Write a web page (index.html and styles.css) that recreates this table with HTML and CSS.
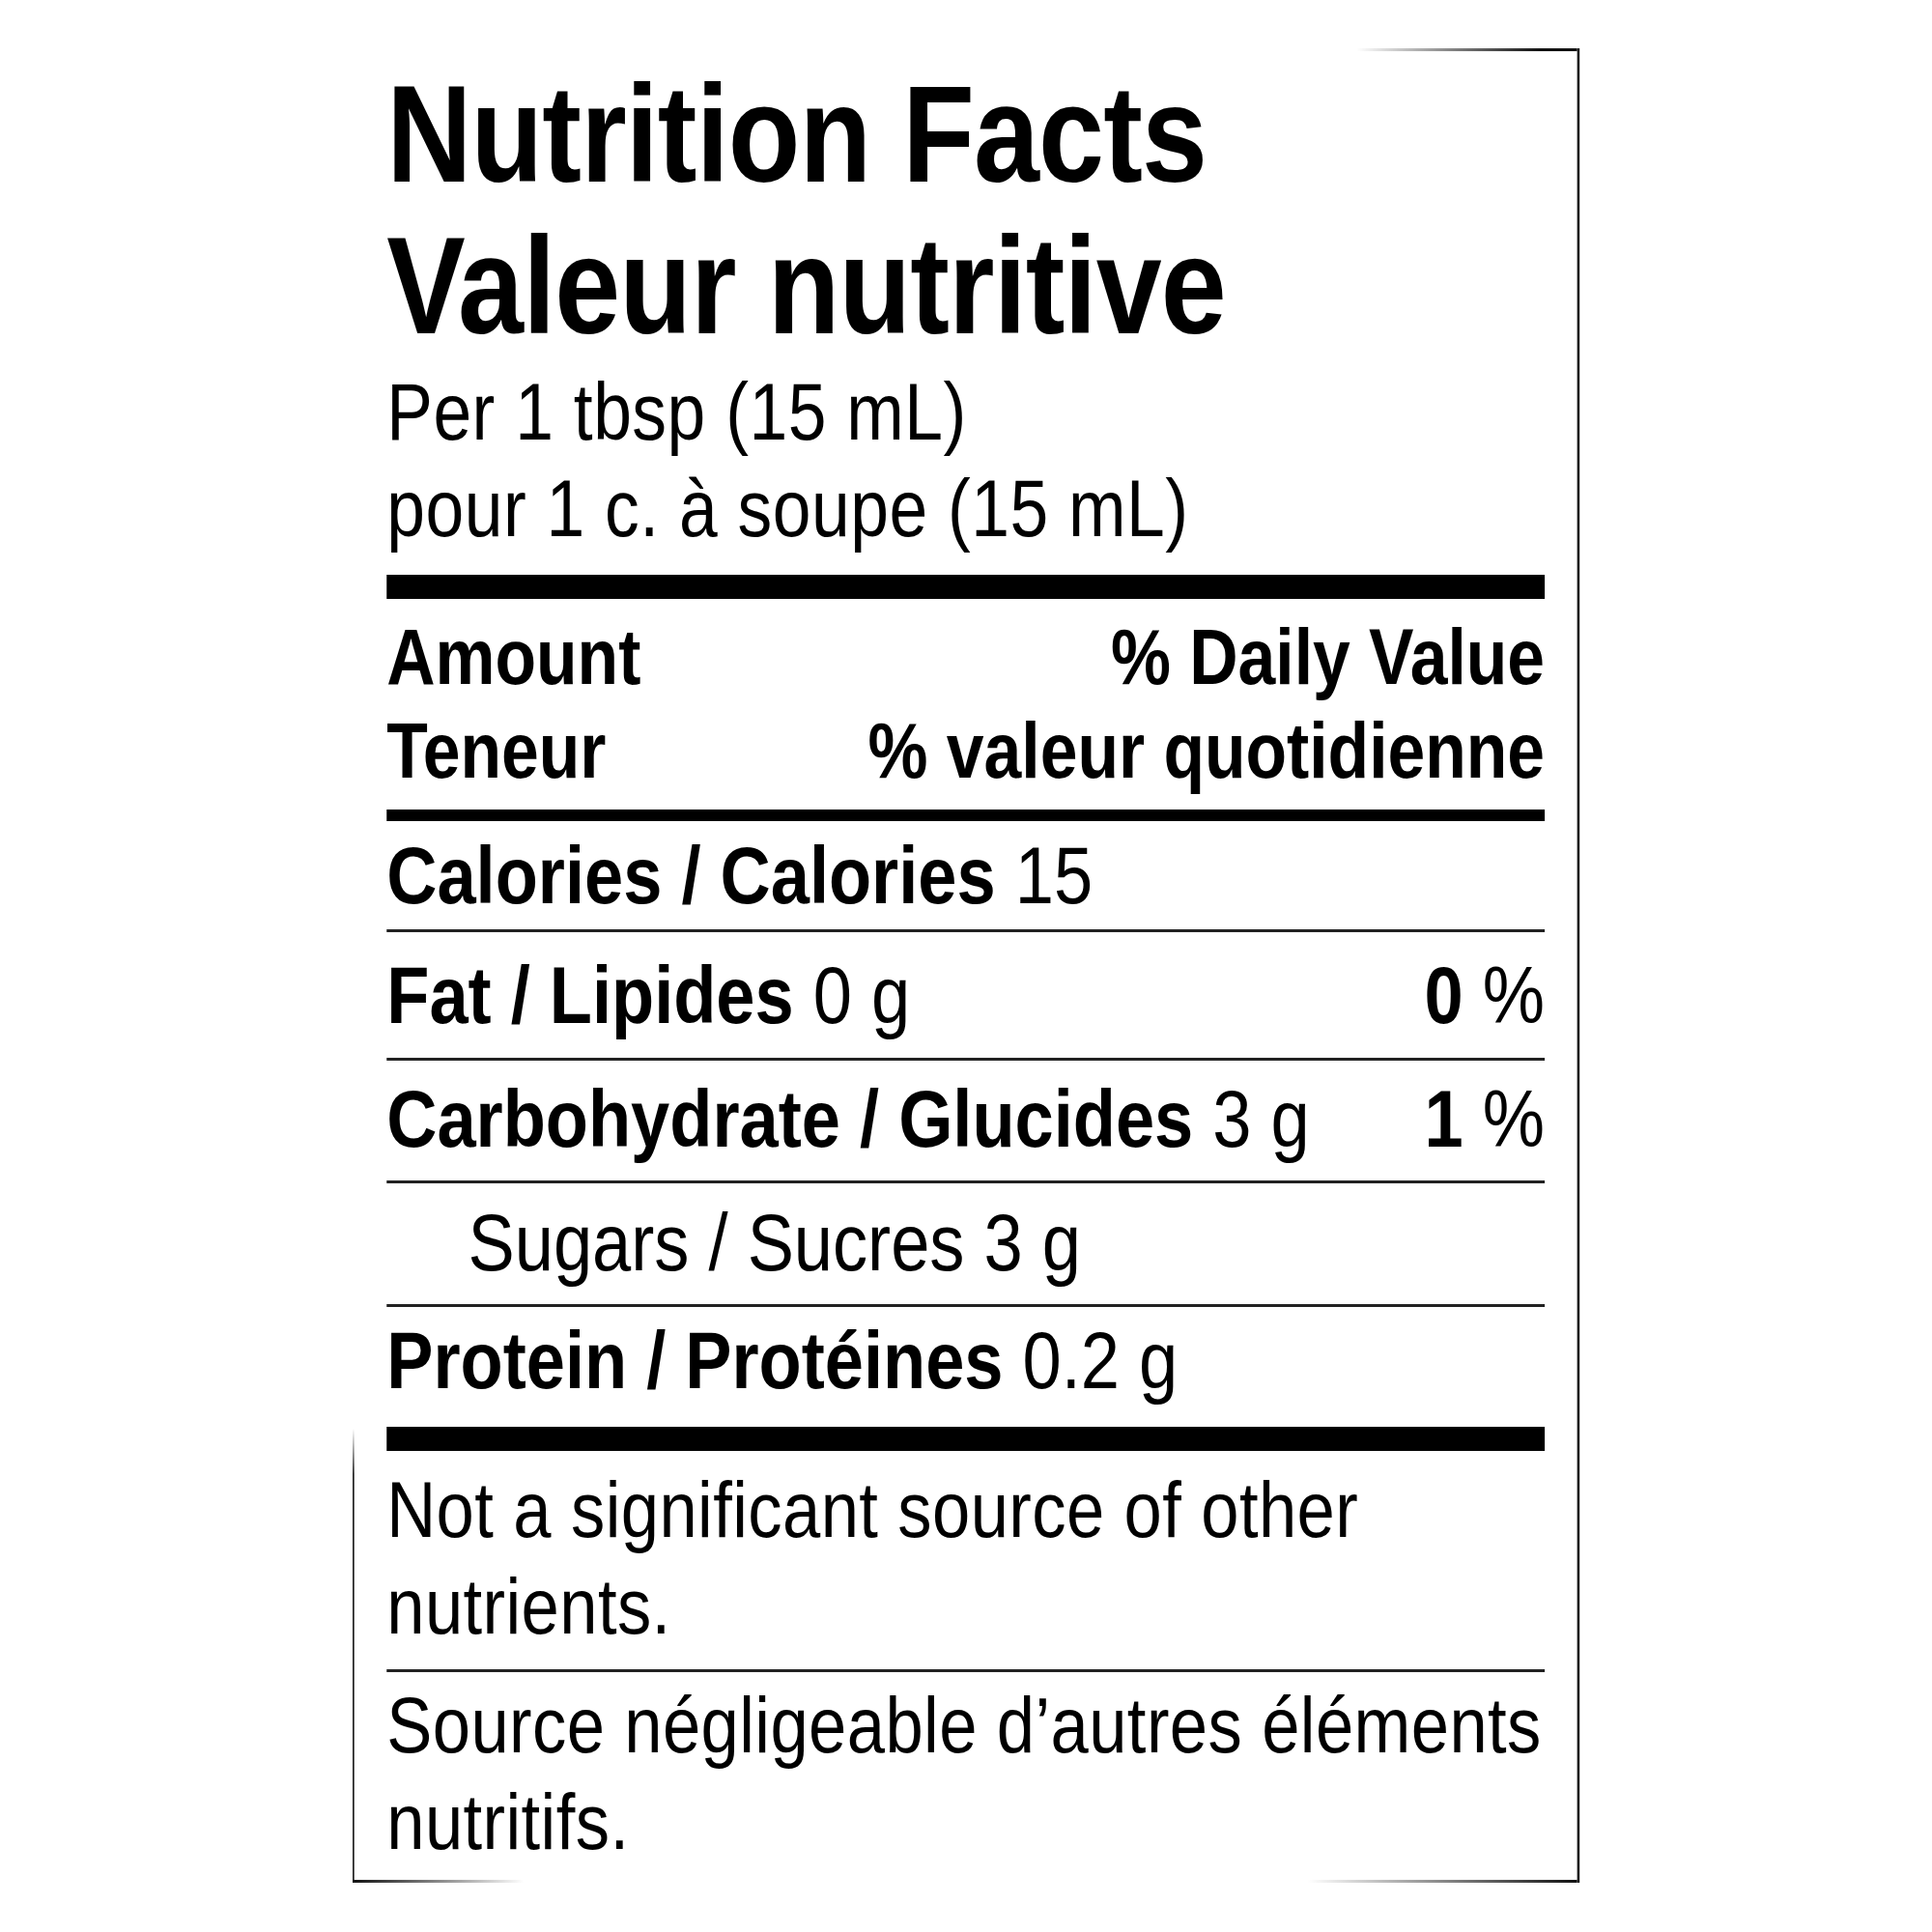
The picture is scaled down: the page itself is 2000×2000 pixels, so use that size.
FILE: index.html
```html
<!DOCTYPE html>
<html lang="en">
<head>
<meta charset="utf-8">
<title>Nutrition Facts / Valeur nutritive</title>
<link rel="stylesheet" href="styles.css">
</head>
<body>
<div class="label">
  <h1 class="title"><span class="title-line">Nutrition Facts</span><span class="title-line">Valeur nutritive</span></h1>
  <p class="serving">Per 1 tbsp (15 mL)<br>pour 1 c. à soupe (15 mL)</p>
  <div class="rule-thick rule-top"></div>
  <div class="head">
    <div class="head-row"><span>Amount</span><span>% Daily Value</span></div>
    <div class="head-row"><span>Teneur</span><span>% valeur quotidienne</span></div>
  </div>
  <div class="rule-mid"></div>
  <div class="row row-cal"><span class="name"><b>Calories / Calories</b> 15</span></div>
  <div class="row row-fat"><span class="name"><b>Fat / Lipides</b> 0 g</span><span class="dv"><b>0</b> %</span></div>
  <div class="row row-carb"><span class="name"><b>Carbohydrate / Glucides</b> 3 g</span><span class="dv"><b>1</b> %</span></div>
  <div class="row row-sugar"><span class="name">Sugars / Sucres 3 g</span></div>
  <div class="row row-protein"><span class="name"><b>Protein / Protéines</b> 0.2 g</span></div>
  <div class="rule-thick"></div>
  <p class="note">Not a significant source of other<br>nutrients.</p>
  <p class="note note-fr">Source négligeable d’autres éléments<br>nutritifs.</p>
</div>
</body>
</html>
```

FILE: styles.css
```css
html, body {
  margin: 0;
  padding: 0;
  background: #fff;
}

body {
  font-family: "Liberation Sans", Arial, sans-serif;
  color: #000;
}

.label {
  box-sizing: border-box;
  width: 1477px;
  margin: 50px 0 0 365px;
  padding: 10px 39px 3px 41px;
  border-right: 3px solid #1a1a1a;
  transform: scaleX(0.86);
  transform-origin: 0 0;
  background:
    linear-gradient(to right, rgba(17, 17, 17, 0) 82%, #111 97%) left top / 100% 3px no-repeat,
    linear-gradient(to right, #111 0%, rgba(17, 17, 17, 0) 14%, rgba(17, 17, 17, 0) 78%, #111 100%) left bottom / 100% 3px no-repeat,
    linear-gradient(to bottom, rgba(17, 17, 17, 0), #222 10%) left bottom / 2px 470px no-repeat;
}

.title {
  margin: 0;
  font-size: 142px;
  line-height: 157px;
  font-weight: 700;
  letter-spacing: -1px;
}

.title-line {
  display: block;
}

.serving {
  margin: 3px 0 0;
  font-size: 83px;
  line-height: 100px;
  letter-spacing: 0.6px;
}

.rule-thick {
  height: 25px;
  background: #000;
}

.rule-top {
  margin-top: 18px;
}

.head {
  padding-top: 12px;
  font-size: 81px;
  line-height: 97px;
  font-weight: 700;
}

.head-row {
  display: flex;
  justify-content: space-between;
}

.rule-mid {
  height: 12px;
  margin-top: 12px;
  background: #000;
}

.row {
  display: flex;
  justify-content: space-between;
  font-size: 84px;
  line-height: 100px;
  padding: 10px 0 14px;
  border-top: 3px solid #222;
  white-space: nowrap;
}

.row b,
.head b {
  font-weight: 700;
}

.row-cal {
  border-top: 0;
  padding: 6px 0;
}

.row-fat {
  padding: 15px 0;
}

.row-sugar {
  padding: 11px 0 14px 98px;
}

.row-protein {
  padding: 5px 0 19px;
}

.note {
  margin: 0;
  font-size: 82px;
  line-height: 100px;
  letter-spacing: 0.5px;
  padding: 11px 0 15px;
  white-space: nowrap;
}

.note-fr {
  border-top: 3px solid #222;
  padding: 5px 0 10px;
}
```
